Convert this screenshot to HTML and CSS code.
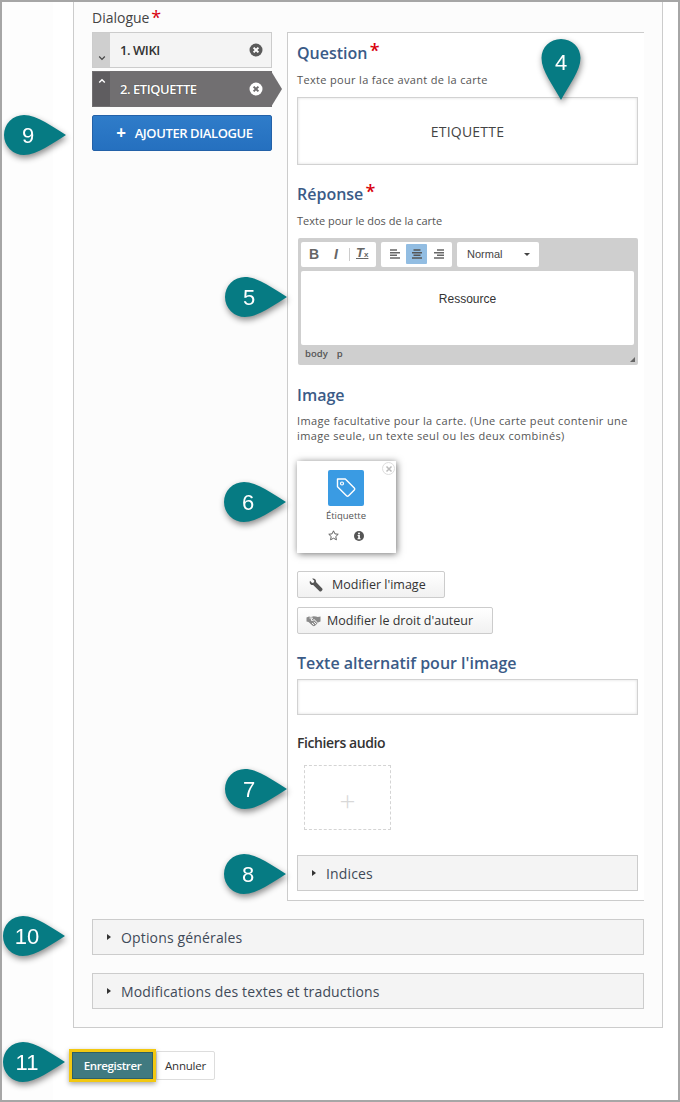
FILE: index.html
```html
<!DOCTYPE html>
<html lang="fr">
<head>
<meta charset="utf-8">
<title>Dialogue</title>
<link rel="stylesheet" href="styles.css">
</head>
<body>
<div class="frame">
  <div class="panel">
    <div class="field-label">Dialogue <span class="req">*</span></div>
    <div class="editor-row">
      <div class="list-col">
        <div class="item">
          <span class="handle"><svg width="8" height="6" viewBox="0 0 8 6"><path d="M1.2 1.5 4 4.3 6.8 1.5" fill="none" stroke="#444" stroke-width="1.2"/></svg></span>
          <span class="item-name">1. WIKI</span>
          <svg class="x-icon" width="14" height="14" viewBox="0 0 14 14"><circle cx="7" cy="7" r="6.5" fill="#5b5b5b"/><path d="M4.6 4.6l4.8 4.8M9.4 4.6l-4.8 4.8" stroke="#fff" stroke-width="2"/></svg>
        </div>
        <div class="item item-active">
          <span class="handle"><svg width="8" height="6" viewBox="0 0 8 6"><path d="M1.2 4.5 4 1.7 6.8 4.5" fill="none" stroke="#fff" stroke-width="1.4"/></svg></span>
          <span class="item-name">2. ETIQUETTE</span>
          <svg class="x-icon" width="14" height="14" viewBox="0 0 14 14"><circle cx="7" cy="7" r="6.5" fill="#fff"/><path d="M4.6 4.6l4.8 4.8M9.4 4.6l-4.8 4.8" stroke="#6f6d6f" stroke-width="2"/></svg>
        </div>
        <div class="add-btn"><span class="add-plus">+</span>AJOUTER DIALOGUE</div>
      </div>
      <div class="pane">
        <div class="heading">Question <span class="req">*</span></div>
        <div class="desc desc-front gap-desc">Texte pour la face avant de la carte</div>
        <div class="text-input tall gap-desc">ETIQUETTE</div>

        <div class="heading gap-section">Réponse <span class="req">*</span></div>
        <div class="desc gap-desc">Texte pour le dos de la carte</div>
        <div class="rte gap-desc">
          <div class="toolbar">
            <div class="tool-group tg-format">
              <span class="tb tb-b">B</span>
              <span class="tb tb-i">I</span>
              <span class="tb-sep"></span>
              <span class="tb tb-tx">T<small>x</small></span>
            </div>
            <div class="tool-group tg-align">
              <span class="ab"><svg width="12" height="10" viewBox="0 0 12 10"><path d="M1 1h7M1 3.700h10M1 6.300h7M1 9h10" stroke="#666" stroke-width="1.500"/></svg></span>
              <span class="ab ab-on"><svg width="12" height="10" viewBox="0 0 12 10"><path d="M2.500 1h7M1 3.700h10M2.500 6.300h7M1 9h10" stroke="#555" stroke-width="1.500"/></svg></span>
              <span class="ab"><svg width="12" height="10" viewBox="0 0 12 10"><path d="M4 1h7M1 3.700h10M4 6.300h7M1 9h10" stroke="#666" stroke-width="1.500"/></svg></span>
            </div>
            <div class="tool-group tg-select"><span>Normal</span><i class="caret"></i></div>
          </div>
          <div class="rte-body">Ressource</div>
          <div class="rte-status"><span>body</span><span>p</span><i class="grip"></i></div>
        </div>

        <div class="heading gap-image">Image</div>
        <div class="desc desc-two">Image facultative pour la carte. (Une carte peut contenir une image seule, un texte seul ou les deux combinés)</div>
        <div class="card">
          <span class="card-close"><svg width="8" height="8" viewBox="0 0 8 8"><path d="M1.500 1.500l5 5M6.500 1.500l-5 5" stroke="#bbb" stroke-width="1.500"/></svg></span>
          <div class="card-icon"><svg width="22" height="22" viewBox="0 0 22 22"><path d="M2.500 2h7.800l9 9a1.500 1.500 0 0 1 0 2.100l-5.700 5.700a1.500 1.500 0 0 1-2.100 0l-9-9z" fill="none" stroke="#fff" stroke-width="1.400" stroke-linejoin="round"/><circle cx="7" cy="6.500" r="1.500" fill="none" stroke="#fff" stroke-width="1.200"/></svg></div>
          <div class="card-name">Étiquette</div>
          <div class="card-actions">
            <svg width="11" height="11" viewBox="0 0 12 12"><path d="M6 .9l1.550 3.300 3.600.45-2.650 2.500.7 3.550L6 8.950 2.800 10.700l.7-3.550L.85 4.650l3.600-.45z" fill="none" stroke="#555" stroke-width="1"/></svg>
            <svg width="10" height="10" viewBox="0 0 10 10"><circle cx="5" cy="5" r="5" fill="#555"/><rect x="4.100" y="1.700" width="1.800" height="1.600" fill="#fff"/><path d="M3.600 4.100h2.300v3.200h.7v1H3.500v-1h.7V5.100h-.6z" fill="#fff"/></svg>
          </div>
        </div>
        <div class="btn btn-first">
          <svg class="btn-icon" width="14" height="14" viewBox="0 0 14 14"><path d="M1 2.800 3.100 4.900 4.900 4.400 5.300 2.700 3.200.7C5.300 0 7.600 1.700 7 4.100l6 6.200c.7.700.7 1.500 0 2.200l-.5.500c-.7.700-1.500.7-2.200 0L4.200 7C2 7.600-.1 5.300 1 2.800z" fill="#555"/></svg>
          Modifier l'image
        </div>
        <div class="btn btn-second">
          <svg class="btn-icon shake" width="15" height="12" viewBox="0 0 15 12"><path d="M.5 2.500 3 1.500c1.500.6 2.500.6 4.500-.3l2.500.2 1.800.6 2.700-.5v5l-2 .8-3.500 3.400c-.7.600-1.500.6-2.300 0L2.500 7 .5 6.500z" fill="#8a8a8a"/><path d="M3.500 3 6.500 3 5 5c1 .8 2.200.6 3-.5l3.800 3.700M6 8l2 1.800M7.800 7l2.200 2" fill="none" stroke="#fff" stroke-width="1"/></svg>
          Modifier le droit d'auteur
        </div>

        <div class="heading gap-alt">Texte alternatif pour l'image</div>
        <div class="text-input short"></div>
        <div class="audio-label">Fichiers audio</div>
        <div class="audio-add">+</div>
        <div class="bar bar-in-pane"><i class="tri"></i>Indices</div>
      </div>
    </div>
    <div class="bar bar-options"><i class="tri"></i>Options générales</div>
    <div class="bar bar-texts"><i class="tri"></i>Modifications des textes et traductions</div>
  </div>
  <div class="actions">
    <div class="save">Enregistrer</div>
    <div class="cancel">Annuler</div>
  </div>

  <div class="pin pin-v pin-4"><svg width="40" height="63" viewBox="0 0 40 63"><path d="M20 1C31 1 39.500 9.500 39.500 20 39.500 33 28 47 20 62 12 47 .5 33 .5 20 .5 9.500 9 1 20 1z" fill="#067b83"/></svg><span>4</span></div>
  <div class="pin pin-h pin-5"><svg width="62" height="40" viewBox="0 0 62 40"><path d="M20 0C33 0 49 12 62 20 49 28 33 40 20 40A20 20 0 0 1 20 0z" fill="#067b83"/></svg><span>5</span></div>
  <div class="pin pin-h pin-6"><svg width="62" height="40" viewBox="0 0 62 40"><path d="M20 0C33 0 49 12 62 20 49 28 33 40 20 40A20 20 0 0 1 20 0z" fill="#067b83"/></svg><span>6</span></div>
  <div class="pin pin-h pin-7"><svg width="62" height="40" viewBox="0 0 62 40"><path d="M20 0C33 0 49 12 62 20 49 28 33 40 20 40A20 20 0 0 1 20 0z" fill="#067b83"/></svg><span>7</span></div>
  <div class="pin pin-h pin-8"><svg width="62" height="40" viewBox="0 0 62 40"><path d="M20 0C33 0 49 12 62 20 49 28 33 40 20 40A20 20 0 0 1 20 0z" fill="#067b83"/></svg><span>8</span></div>
  <div class="pin pin-h pin-9"><svg width="62" height="40" viewBox="0 0 62 40"><path d="M20 0C33 0 49 12 62 20 49 28 33 40 20 40A20 20 0 0 1 20 0z" fill="#067b83"/></svg><span>9</span></div>
  <div class="pin pin-h pin-10"><svg width="62" height="40" viewBox="0 0 62 40"><path d="M20 0C33 0 49 12 62 20 49 28 33 40 20 40A20 20 0 0 1 20 0z" fill="#067b83"/></svg><span>10</span></div>
  <div class="pin pin-h pin-11"><svg width="62" height="40" viewBox="0 0 62 40"><path d="M20 0C33 0 49 12 62 20 49 28 33 40 20 40A20 20 0 0 1 20 0z" fill="#067b83"/></svg><span>11</span></div>
</div>
</body>
</html>
```

FILE: styles.css
```css
* { box-sizing: border-box; }
html, body { margin: 0; padding: 0; }
body {
  width: 680px;
  height: 1102px;
  overflow: hidden;
  font-family: "Open Sans", sans-serif;
  color: #333;
  background: #fff;
}
.frame {
  position: relative;
  width: 680px;
  height: 1102px;
  border: 2px solid #a6a6a6;
  padding-left: 71px;
  background: linear-gradient(90deg, #fdfdfd 51px, #fff 51px);
  overflow: hidden;
}
.panel {
  width: 590px;
  height: 1026px;
  padding: 8px 18px 0;
  background: #fcfcfc;
  border: 1px solid #ccc;
  border-top: 0;
}
.req { color: #d8000c; font-size: 18px; line-height: 14px; vertical-align: top; margin-left: -2px; }
.field-label { height: 22px; font-size: 14px; font-weight: 500; line-height: 16px; color: #444; }
.editor-row { display: flex; gap: 15px; }
.list-col { width: 180px; flex: none; }
.item {
  position: relative;
  display: flex;
  align-items: center;
  height: 36px;
  margin-bottom: 3px;
  background: #f4f4f4;
  border: 1px solid #ccc;
}
.handle {
  align-self: stretch;
  width: 17px;
  flex: none;
  background: #cfcfcf;
  display: flex;
  justify-content: center;
  align-items: flex-end;
  padding-bottom: 6px;
}
.item-name {
  flex: 1;
  padding-left: 10px;
  font-size: 13px;
  font-weight: 600;
  letter-spacing: -.45px;
  color: #333;
}
.x-icon { margin-right: 8px; flex: none; }
.item-active { background: #716f71; border-color: #716f71; margin-bottom: 8px; }
.item-active::after {
  content: "";
  position: absolute;
  left: 100%;
  top: -1px;
  border-left: 11px solid #716f71;
  border-top: 18px solid transparent;
  border-bottom: 18px solid transparent;
}
.item-active .handle { background: #5f5d60; align-items: flex-start; padding: 6px 0 0; }
.item-active .item-name { color: #fff; text-shadow: 0 0 1px #333; }
.add-btn {
  display: flex;
  align-items: center;
  justify-content: center;
  height: 36px;
  padding-left: 5px;
  background: linear-gradient(#2f7cc9, #2570bf);
  border: 1px solid #2361a8;
  border-radius: 2px;
  color: #fff;
  font-size: 13px;
  font-weight: 600;
  letter-spacing: -.4px;
}
.add-plus { font-size: 17px; font-weight: 700; margin-right: 9px; line-height: 16px; }
.pane {
  width: 357px;
  height: 869px;
  flex: none;
  padding: 10px 5px 0 9px;
  background: #fff;
  border: 1px solid #ccc;
  border-right: 0;
}
.heading { height: 20px; font-size: 16px; font-weight: 600; line-height: 20px; color: #3b5b87; white-space: nowrap; }
.desc { height: 16px; font-size: 11px; line-height: 16px; color: #555; white-space: nowrap; }
.desc-front { letter-spacing: .33px; }
.gap-desc { margin-top: 9px; }
.gap-section { margin-top: 19px; }
.gap-image { margin-top: 20px; }
.gap-alt { margin-top: 19px; }
.text-input {
  width: 341px;
  background: #fff;
  border: 1px solid #d2d2d2;
  box-shadow: inset 0 0 3px rgba(0,0,0,.14);
  display: flex;
  align-items: center;
  justify-content: center;
  font-size: 14px;
  line-height: 20px;
  letter-spacing: .2px;
  padding-top: 1px;
  color: #444;
}
.tall { height: 68px; }
.short { height: 36px; margin-top: 6px; }
.rte {
  position: relative;
  width: 340px;
  height: 127px;
  margin-left: 1px;
  padding: 4px 3px 3px;
  background: #cfcfcf;
  border-radius: 2px;
}
.toolbar { display: flex; gap: 5px; height: 25px; }
.tool-group { display: flex; align-items: center; background: #fff; border-radius: 2px; }
.tg-format { width: 75px; padding: 0 0 1px 8px; }
.tb { font-family: "Liberation Sans", sans-serif; font-size: 14px; color: #666; }
.tb-b { width: 22px; font-weight: 700; }
.tb-i { width: 18px; font-style: italic; font-weight: 700; padding-left: 3px; }
.tb-sep { width: 1px; height: 13px; background: #ccc; margin-right: 6px; }
.tb-tx { font-style: italic; font-weight: 700; font-size: 13px; text-decoration: underline; line-height: 14px; }
.tb-tx small { font-size: 8px; font-style: normal; }
.tg-align { width: 71px; padding: 0 2px 1px; gap: 1px; justify-content: center; }
.ab { width: 21px; height: 20px; display: flex; align-items: center; justify-content: center; border-radius: 1px; }
.ab-on { background: #92bde2; }
.tg-select {
  width: 82px;
  padding: 0 9px 1px 10px;
  justify-content: space-between;
  font-family: "Liberation Sans", sans-serif;
  font-size: 11px;
  color: #444;
}
.caret { border-top: 3px solid #444; border-left: 3px solid transparent; border-right: 3px solid transparent; }
.rte-body {
  height: 74px;
  margin-top: 4px;
  width: 333px;
  padding-top: 20px;
  background: #fff;
  border-radius: 2px;
  text-align: center;
  font-family: "Liberation Sans", sans-serif;
  font-size: 12px;
  line-height: 16px;
  color: #333;
}
.rte-status {
  display: flex;
  gap: 9px;
  padding: 2px 0 0 4px;
  font-size: 9.500px;
  font-weight: 600;
  line-height: 14px;
  color: #555;
}
.grip {
  position: absolute;
  right: 3px;
  bottom: 3px;
  border-bottom: 5px solid #666;
  border-left: 5px solid transparent;
}
.desc-two { height: 30px; margin-top: 8px; font-size: 11px; line-height: 15px; white-space: normal; letter-spacing: .36px; width: 341px; }
.card {
  position: relative;
  width: 99px;
  height: 92px;
  margin-top: 18px;
  padding-top: 9px;
  background: #fff;
  box-shadow: 1px 1px 7px rgba(0,0,0,.55);
  text-align: center;
}
.card-close {
  position: absolute;
  top: 1px;
  right: 1px;
  width: 13px;
  height: 13px;
  display: flex;
  align-items: center;
  justify-content: center;
  border: 1px solid #ddd;
  border-radius: 50%;
  background: #fff;
}
.card-icon {
  width: 36px;
  height: 36px;
  margin: 0 0 0 31px;
  display: flex;
  align-items: center;
  justify-content: center;
  background: #3a9be3;
  border-radius: 2px;
}
.card-name { margin-top: 3px; padding-right: 1px; font-size: 9.500px; line-height: 13px; color: #555; }
.card-actions { display: flex; justify-content: center; align-items: center; gap: 15px; margin-top: 8px; padding-right: 2px; }
.btn {
  display: flex;
  align-items: center;
  height: 27px;
  background: linear-gradient(#fff, #f1f1f1);
  border: 1px solid #ccc;
  border-radius: 2px;
  font-size: 12.500px;
  color: #333;
  white-space: nowrap;
}
.btn-first { width: 148px; margin-top: 18px; padding-left: 11px; }
.btn-first .btn-icon { margin-right: 9px; }
.btn-second { width: 196px; margin-top: 9px; padding-left: 8px; }
.btn-second .btn-icon { margin-right: 6px; }
.audio-label { height: 20px; margin-top: 18px; font-size: 14px; font-weight: 600; line-height: 20px; letter-spacing: -.4px; color: #333; }
.audio-add {
  width: 87px;
  height: 65px;
  margin: 12px 0 0 7px;
  border: 1px dashed #d4d4d4;
  display: flex;
  align-items: center;
  justify-content: center;
  font-size: 28px;
  font-weight: 300;
  line-height: 28px;
  color: #d8d8d8;
  padding-top: 4px;
}
.bar {
  display: flex;
  align-items: center;
  height: 36px;
  background: #f4f4f4;
  border: 1px solid #ccc;
  color: #3f4a58;
  font-size: 14px;
  letter-spacing: .15px;
}
.tri { border-left: 4px solid #333; border-top: 3px solid transparent; border-bottom: 3px solid transparent; margin: 0 10px 0 14px; }
.bar-in-pane { width: 341px; margin-top: 25px; }
.bar-options { width: 552px; margin-top: 18px; }
.bar-texts { width: 552px; margin-top: 18px; }
.actions { display: flex; align-items: center; margin: 21px 0 0 -4px; }
.save {
  width: 87px;
  height: 33px;
  display: flex;
  align-items: center;
  justify-content: center;
  background: #407a80;
  border: 3px solid #f2c811;
  box-shadow: inset 0 0 0 1px #2f5f65, 0 2px 5px rgba(0,0,0,.35);
  color: #fff;
  font-size: 11.500px;
  font-weight: 600;
  letter-spacing: -.35px;
  position: relative;
  z-index: 1;
}
.cancel {
  width: 59px;
  height: 29px;
  display: flex;
  align-items: center;
  justify-content: center;
  background: #fff;
  border: 1px solid #ddd;
  border-radius: 0 2px 2px 0;
  font-size: 11.500px;
  letter-spacing: -.2px;
  color: #333;
}
.pin { position: absolute; filter: drop-shadow(1px 3px 3px rgba(0,0,0,.45)); }
.pin svg { display: block; }
.pin span {
  position: absolute;
  top: 1px;
  left: 0;
  width: 48px;
  height: 40px;
  display: flex;
  align-items: center;
  justify-content: center;
  font-family: "Liberation Sans", sans-serif;
  font-size: 22px;
  color: #fff;
}
.pin-h { width: 62px; height: 40px; }
.pin-v { width: 40px; height: 63px; }
.pin-v span { width: 40px; height: 48px; }
.pin-4 { left: 539px; top: 36px; }
.pin-5 { left: 223px; top: 275px; }
.pin-6 { left: 222px; top: 480px; }
.pin-7 { left: 223px; top: 767px; }
.pin-8 { left: 222px; top: 852px; }
.pin-9 { left: 2px; top: 113px; }
.pin-10 { left: 1px; top: 914px; }
.pin-11 { left: 1px; top: 1040px; }
```
